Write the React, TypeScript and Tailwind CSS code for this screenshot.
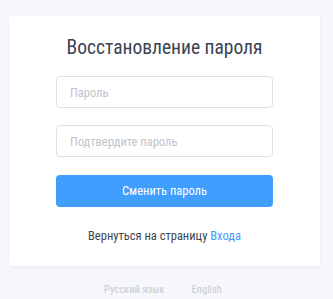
import React from "react";

export default function App() {
  return (
    <div
      className="min-h-[299px] w-[333px] bg-[#f5f7fa] pt-4"
      style={{ fontFamily: '"Roboto Condensed", "Liberation Sans", Arial, sans-serif' }}
    >
      <div className="ml-[9px] w-[311px] bg-white px-[47px] pt-[18px] pb-5 shadow-[0_1px_4px_0_rgba(0,0,0,0.06)]">
        <h1 className="whitespace-nowrap text-center text-[19.5px] leading-[28px] text-[#3b4354]">Восстановление пароля</h1>
        <input
          type="password"
          placeholder="Пароль"
          className="mt-[14px] block h-8 w-full rounded border border-[#dcdfe6] px-[13px] text-[12.5px] text-[#606266] outline-none placeholder:text-[#c0c4cc]"
        />
        <input
          type="password"
          placeholder="Подтвердите пароль"
          className="mt-[17px] block h-8 w-full rounded border border-[#dcdfe6] px-[13px] text-[12.5px] text-[#606266] outline-none placeholder:text-[#c0c4cc]"
        />
        <button className="mt-[18px] block h-8 w-full rounded bg-[#409eff] text-[12.5px] text-white">
          Сменить пароль
        </button>
        <p className="mt-[19px] text-center text-[12.5px] leading-5 text-[#3f4652]">
          Вернуться на страницу <a className="text-[#409eff]">Входа</a>
        </p>
      </div>
      <div className="mt-[14px] flex justify-center gap-[27px] pr-[7px] text-[10.6px] leading-5 text-[#c8cbd2]">
        <span>Русский язык</span>
        <span>English</span>
      </div>
    </div>
  );
}
